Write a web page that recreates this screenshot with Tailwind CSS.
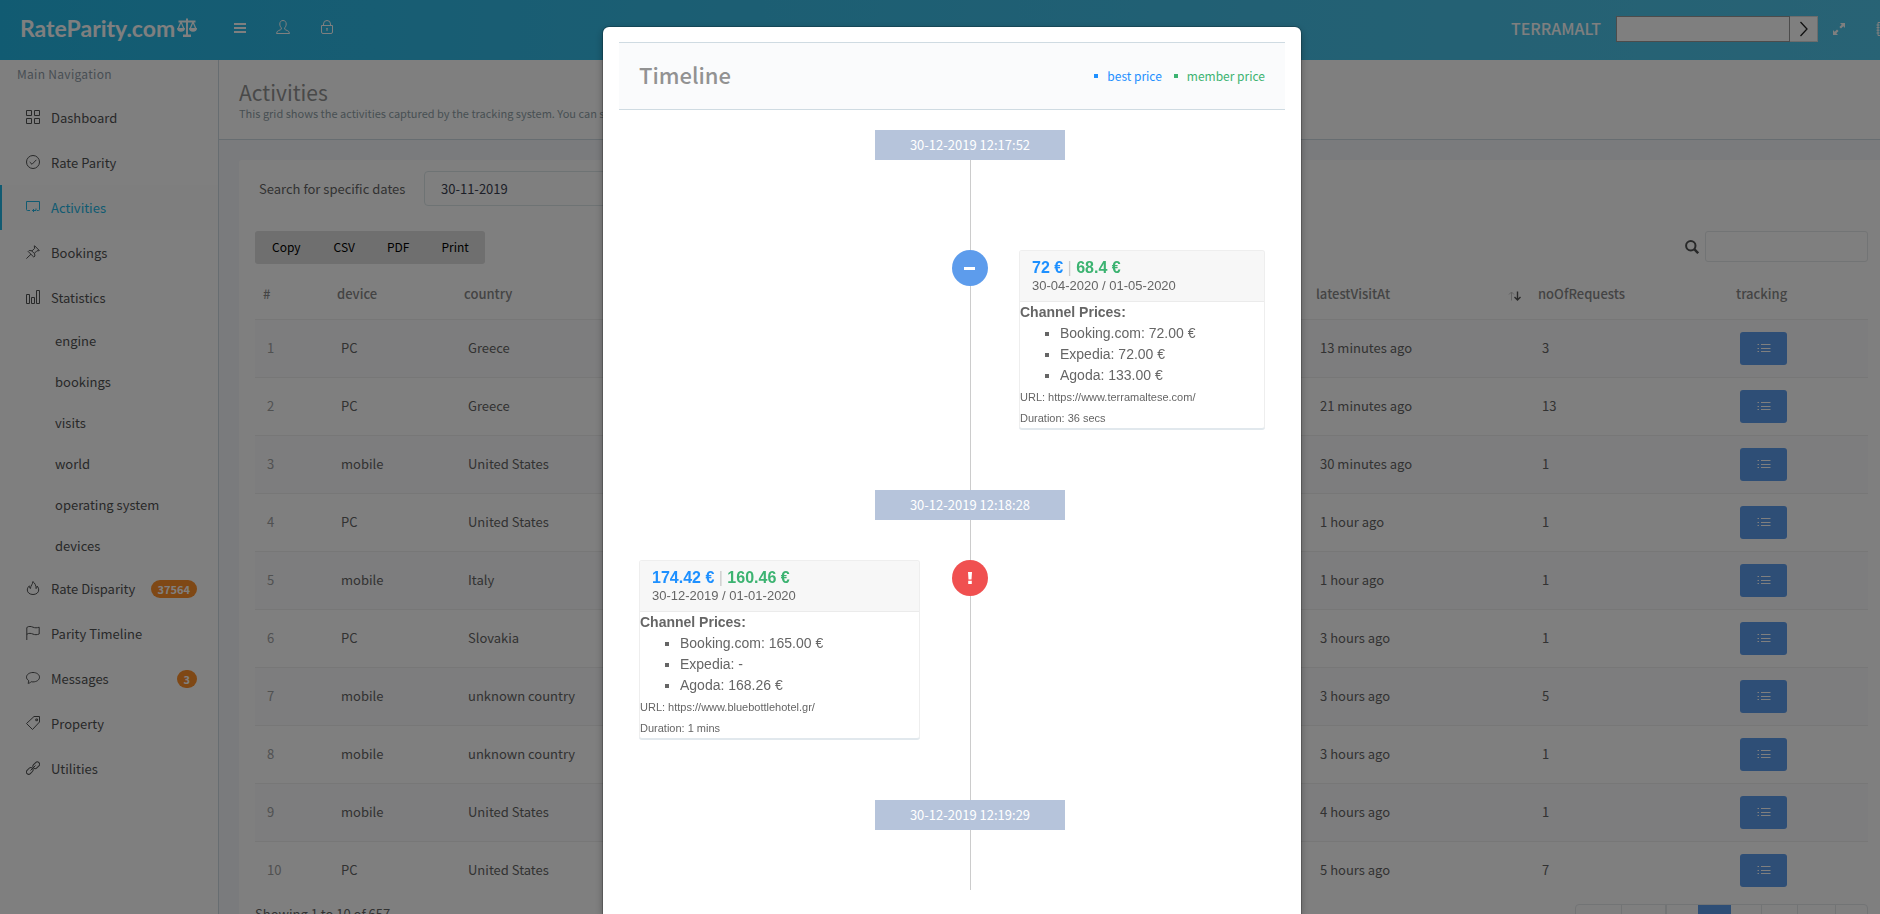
<!DOCTYPE html>
<html lang="en">
<head>
<meta charset="utf-8">
<title>RateParity.com - Activities</title>
<script src="https://cdn.jsdelivr.net/npm/@tailwindcss/browser@4"></script>
</head>
<body class="h-screen overflow-hidden bg-[#f5f7fa] font-['Noto_Sans_CJK_SC',sans-serif] text-[13px] leading-5 text-[#656565]">

<div class="flex h-screen w-[calc(100%+16px)] flex-col overflow-hidden">
  <header class="flex h-[60px] shrink-0 items-center bg-linear-to-r from-[#23b7e5] to-[#51c6ea] pb-3.5 text-white">
    <a href="#" class="ml-5 mt-2.5 flex w-[214px] items-center gap-0.5 font-['Lato',sans-serif] text-[23px] font-bold leading-7">RateParity.com
      <svg class="h-5 w-5" viewBox="0 0 20 20" fill="none" stroke="currentColor" stroke-width="2"><path d="M1.500 3.500h17M10 .5V17" /><path d="M4 4 1.200 10.500M4 4l2.800 6.500M16 4l-2.800 6.500M16 4l2.800 6.500" stroke-width="1.300"/><path d="M0 10h8a4 3.800 0 0 1-8 0zM12 10h8a4 3.800 0 0 1-8 0zM6 16.500h8V19H6z" fill="currentColor" stroke="none"/></svg>
    </a>
    <button aria-label="Toggle menu" class="mt-2.5"><svg class="h-3 w-3" viewBox="0 0 12 12" fill="none" stroke="currentColor" stroke-width="2"><path d="M0 2h12M0 6h12M0 10h12"/></svg></button>
    <button aria-label="Profile" class="ml-[30px] mt-2"><svg class="h-3.5 w-3.5" viewBox="0 0 14 14" fill="none" stroke="currentColor"><path d="M7 .5c-2 0-3.200 1.400-3.200 3.500 0 1.600.6 3 1.500 3.800v1.400C4.800 10.300.5 10.200.5 13.500h13c0-3.300-4.300-3.200-4.800-4.300V7.800c.9-.8 1.500-2.200 1.500-3.800C10.200 1.900 9 .5 7 .5z"/></svg></button>
    <button aria-label="Lock" class="ml-[30px] mt-2"><svg class="h-3.5 w-3.5" viewBox="0 0 14 14" fill="none" stroke="currentColor"><path d="M3.500 5.500V4a3.500 3.500 0 0 1 7 0v1.500M1.500 5.500h11v6.500a1.500 1.500 0 0 1-1.500 1.500H3a1.500 1.500 0 0 1-1.500-1.500z"/><path d="M7 8v3M6.300 8.800h1.400"/></svg></button>
    <div class="ml-auto mt-3 flex items-center">
      <span class="mr-[15px] pb-0.5 text-[16px] font-medium">TERRAMALT</span>
      <input aria-label="Search hotel" class="h-[26px] w-[174px] border border-[#999] bg-white px-1 text-[#656565]">
      <button aria-label="Go" class="flex h-[26px] w-7 items-center justify-center border border-l-0 border-[#d8d8d8] bg-white text-[#222]"><svg class="h-4 w-2.5" viewBox="0 0 10 16" fill="none" stroke="currentColor" stroke-width="1.3"><path d="m1.500 1 6.500 7-6.500 7"/></svg></button>
      <button aria-label="Full screen" class="ml-[15px]"><svg class="h-3 w-3" viewBox="0 0 12 12"><path d="M7 0h5v5l-1.700-1.700L8 5.600 6.400 4l2.300-2.300zM0 7v5h5l-1.700-1.700L5.600 8 4 6.400 1.700 8.700z" fill="currentColor"/></svg></button>
      <button aria-label="Notebook" class="ml-[31px] mr-1.5"><svg class="h-3.5 w-3.5" viewBox="0 0 14 14" fill="none" stroke="currentColor"><path d="M2 .5h11v13H2zM4.500.500v13M.5 3h3M.5 5.600h3M.5 8.200h3M.5 11h3"/></svg></button>
    </div>
  </header>

  <div class="flex min-h-0 grow">
    <aside class="w-[219px] shrink-0 border-r border-[#cfdbe2] bg-white">
      <h2 class="h-[35px] pl-[17px] pt-1 text-[12px] tracking-wide text-[#919da8]">Main Navigation</h2>
      <nav class="whitespace-nowrap text-[13px] text-[#515253]">
        <a href="#" class="flex h-[45px] items-center gap-[11px] pl-[26px]"><svg class="-mt-0.5 h-3.5 w-3.5" viewBox="0 0 14 14" fill="none" stroke="currentColor"><path d="M.5.5h5v5h-5zM8.500.5h5v5h-5zM.5 8.500h5v5h-5zM8.500 8.500h5v5h-5z"/></svg>Dashboard</a>
        <a href="#" class="flex h-[45px] items-center gap-[11px] pl-[26px]"><svg class="-mt-0.5 h-3.5 w-3.5" viewBox="0 0 14 14" fill="none" stroke="currentColor"><circle cx="7" cy="7" r="6.500"/><path d="m3.700 7 2.300 2.300 4.400-4.500"/></svg>Rate Parity</a>
        <a href="#" class="flex h-[45px] items-center gap-[11px] border-l-2 border-[#23b7e5] bg-[#fcfcfc] pl-6 text-[#23b7e5]"><svg class="-mt-0.5 h-3.5 w-3.5" viewBox="0 0 14 14" fill="none" stroke="currentColor"><path d="M4 10.500H1.500a1 1 0 0 1-1-1v-8h13v8a1 1 0 0 1-1 1H11M10 8.500v2H6.500M8 9l-1.500 1.500L8 12"/></svg>Activities</a>
        <a href="#" class="flex h-[45px] items-center gap-[11px] pl-[26px]"><svg class="-mt-0.5 h-3.5 w-3.5" viewBox="0 0 14 14" fill="none" stroke="currentColor"><path d="m8.500.7 4.800 4.800-1.300.4-1-.2-2.500 2.500.4 2.800-1.100 1.100-5.600-5.600 1-1 2.900.3 2.600-2.500-.4-1.300zM5 9.200.4 13.600M5.800 6l2.400 2.400"/></svg>Bookings</a>
        <a href="#" class="flex h-[45px] items-center gap-[11px] pl-[26px]"><svg class="-mt-0.5 h-3.5 w-3.5" viewBox="0 0 14 14" fill="none" stroke="currentColor"><path d="M.5 4.500h3v9h-3zM5.500 7.500h3v6h-3zM10.500.5h3v13h-3z"/></svg>Statistics</a>
        <div class="flex flex-col">
          <a href="#" class="flex h-[41px] items-center pl-[55px]">engine</a>
          <a href="#" class="flex h-[41px] items-center pl-[55px]">bookings</a>
          <a href="#" class="flex h-[41px] items-center pl-[55px]">visits</a>
          <a href="#" class="flex h-[41px] items-center pl-[55px]">world</a>
          <a href="#" class="flex h-[41px] items-center pl-[55px]">operating system</a>
          <a href="#" class="flex h-[41px] items-center pl-[55px]">devices</a>
        </div>
        <a href="#" class="flex h-[45px] items-center gap-[11px] pl-[26px] pr-[21px]"><svg class="-mt-0.5 h-3.5 w-3.5 shrink-0" viewBox="0 0 14 14" fill="none" stroke="currentColor"><path d="M6.800.5C7 3 4.600 4.500 4.400 7.600 3.600 7 3.200 6 3.400 4.800 2 6 1.300 7.500 1.300 9c0 2.700 2.500 4.500 5.700 4.500s5.700-1.800 5.700-4.500c0-1.600-.6-3-1.600-4 0 1.200-.3 2-1 2.600C10.200 5 9 2 6.800.5z"/></svg>Rate Disparity<span class="ml-auto rounded-full bg-[#ff902b] px-[7px] text-[11px] font-bold leading-[18px] text-white">37564</span></a>
        <a href="#" class="flex h-[45px] items-center gap-[11px] pl-[26px]"><svg class="-mt-0.5 h-3.5 w-3.5" viewBox="0 0 14 14" fill="none" stroke="currentColor"><path d="M.8 14V1.500C3-.2 5 .4 7 1.200s4 .8 6.200 0V8c-2.200.9-4.200.9-6.200.1S3 6.800.8 8.300"/></svg>Parity Timeline</a>
        <a href="#" class="flex h-[45px] items-center gap-[11px] pl-[26px] pr-[21px]"><svg class="-mt-0.5 h-3.5 w-3.5" viewBox="0 0 14 14" fill="none" stroke="currentColor"><path d="M7 1.500c3.600 0 6.500 2 6.500 4.700s-2.900 4.700-6.500 4.700c-.6 0-1.200 0-1.800-.2-.8.900-1.900 1.600-3.200 1.600.5-.8.800-1.600.7-2.700C1.300 8.700.5 7.600.5 6.200.5 3.500 3.400 1.500 7 1.500z"/></svg>Messages<span class="ml-auto rounded-full bg-[#ff902b] px-[7px] text-[11px] font-bold leading-[18px] text-white">3</span></a>
        <a href="#" class="flex h-[45px] items-center gap-[11px] pl-[26px]"><svg class="-mt-0.5 h-3.5 w-3.5" viewBox="0 0 14 14" fill="none" stroke="currentColor"><path d="M8 .5h5.500V6l-7 7.500-6-6zM9.800 3h1.700v1.700H9.800z"/></svg>Property</a>
        <a href="#" class="flex h-[45px] items-center gap-[11px] pl-[26px]"><svg class="-mt-0.5 h-3.5 w-3.5" viewBox="0 0 14 14" fill="none" stroke="currentColor"><rect x="6.500" y="2" width="7.500" height="4.600" rx="2.300" transform="rotate(-45 10.250 4.300)"/><rect x="0" y="7.600" width="7.500" height="4.600" rx="2.300" transform="rotate(-45 3.750 9.900)"/><path d="m4.500 9.500 5-5"/></svg>Utilities</a>
      </nav>
    </aside>

    <main class="flex min-w-0 grow flex-col">
      <div class="h-20 shrink-0 whitespace-nowrap border-b border-[#cfdbe2] bg-white pl-5 pt-[18px]">
        <h1 class="text-[21px] leading-7 text-[#929292]">Activities</h1>
        <p class="text-[11px] leading-[14px] text-[#909fa7]">This grid shows the activities captured by the tracking system. You can see</p>
      </div>
      <section class="ml-5 mr-3 mt-5 rounded-[3px] bg-white px-4 pt-[11px]">
        <div class="flex items-center pl-1">
          <label for="from" class="w-[165px]">Search for specific dates</label>
          <input id="from" value="30-11-2019" class="h-[35px] w-80 rounded border border-[#dde6e9] px-4 text-[#3a3f51]">
        </div>
        <div class="mt-[25px] flex items-start justify-between">
          <div class="flex h-[33px] rounded-[3px] bg-[#dedede] text-[12px] text-black">
            <button class="px-[17px] pb-0.5">Copy</button><button class="px-4 pb-0.5">CSV</button><button class="px-4 pb-0.5">PDF</button><button class="px-4 pb-0.5">Print</button>
          </div>
          <label class="flex items-center gap-1.5"><svg class="h-3.5 w-3.5 text-[#515253]" viewBox="0 0 14 14" fill="none" stroke="currentColor" stroke-width="2"><circle cx="5.800" cy="5.800" r="4.700"/><path d="m9.200 9.200 4 4" stroke-width="2.500"/></svg><input aria-label="Search table" class="h-[31px] w-[163px] rounded-[3px] border border-[#e4e8ea] px-2"></label>
        </div>
        <table class="mt-[5px] w-full table-fixed border-collapse text-left">
          <colgroup><col class="w-[74px]"><col class="w-[127px]"><col><col class="w-[222px]"><col class="w-[198px]"><col class="w-[140px]"></colgroup>
          <thead>
            <tr class="h-[50px] text-[#888]">
              <th class="px-2 font-medium">#</th><th class="px-2 font-medium">device</th><th class="px-2 font-medium">country</th>
              <th class="px-2 font-medium"><span class="flex items-center justify-between">latestVisitAt<svg class="mt-1 h-2.5 w-3.5" viewBox="0 0 14 10" fill="none"><path d="M3.500 9.500V1M1 3.500 3.500 1 6 3.500" stroke="#c4c4c4"/><path d="M9.500.5V9M6.500 6l3 3 3-3" stroke="#555" stroke-width="1.400"/></svg></span></th>
              <th class="px-2 font-medium">noOfRequests</th><th class="px-2 font-medium">tracking</th>
            </tr>
          </thead>
          <tbody id="rows"></tbody>
        </table>
        <div class="mt-[5px] flex items-start justify-between">
          <p>Showing 1 to 10 of 657</p>
          <div class="flex h-8 rounded border border-[#e4e8ea] text-center">
            <button class="w-[46px] border-r border-[#e4e8ea]">First</button><button class="w-[45px] border-r-2 border-[#e4e8ea]">Prev</button><button class="w-[31px]">1</button><button class="w-[33px] bg-[#5d9cec] text-white">2</button><button class="w-[31px] border-r border-[#e4e8ea]">3</button><button class="w-[36px] border-r border-[#e4e8ea]">4</button><button class="w-[38px] border-r border-[#e4e8ea]">5</button><button class="w-[31px]">6</button>
          </div>
        </div>
      </section>
    </main>
  </div>
</div>

<div class="fixed inset-0 flex items-start justify-center overflow-hidden bg-black/50 pl-6 pt-[27px]">
  <div role="dialog" aria-label="Timeline" class="min-h-full w-[698px] max-w-full rounded-t-md bg-white px-4 pt-[15px] shadow-[0_0_0_1px_rgba(0,0,0,0.2),0_3px_9px_rgba(0,0,0,0.3)]">
    <div class="flex h-[68px] items-center justify-between border-y border-[#cfdbe2] bg-[#fafbfc] px-5">
      <h2 class="pb-1 text-[22px] font-medium text-[#929292]">Timeline</h2>
      <ul class="flex gap-3 text-[12px]">
        <li class="flex items-center gap-[9px] text-[#1e90ff]"><span class="h-1 w-1 bg-current"></span>best price</li>
        <li class="flex items-center gap-[9px] text-[#3cb371]"><span class="h-1 w-1 bg-current"></span>member price</li>
      </ul>
    </div>
    <div class="relative mx-5 mt-5 pb-[60px]">
      <div class="absolute inset-0 grid grid-cols-[331fr_295fr]"><span class="col-start-2 w-px bg-[#ccc]"></span></div>
      <div class="relative grid grid-cols-[281fr_99fr_246fr] items-start">
        <div class="col-span-3 ml-[236px] h-[30px] w-[190px] bg-[#b6c4db] text-center text-[13px] leading-[30px] text-white">30-12-2019 12:17:52</div>

        <div class="col-start-2 mt-[90px] flex h-9 w-9 items-center justify-center justify-self-center rounded-full bg-[#5d9cec]"><span class="h-[3px] w-[11px] bg-white"></span></div>
        <article class="mb-[61px] mt-[90px] overflow-hidden rounded-[3px] border border-[#eee] border-b-[#e1e8ed] bg-white font-['Liberation_Sans',sans-serif] text-[14px] leading-[21px] shadow-[0_1px_0_#e1e8ed]">
          <header class="border-b border-[#ebebeb] bg-[#f7f7f7] px-3 pb-1.5 pt-2 leading-[18px]">
            <h3 class="text-[16px] font-bold"><span class="text-[#1e90ff]">72 €</span> <span class="font-normal text-[#ccc]">|</span> <span class="text-[#3cb371]">68.4 €</span></h3>
            <p class="text-[13px]">30-04-2020 / 01-05-2020</p>
          </header>
          <p class="font-bold">Channel Prices:</p>
          <ul class="list-[square] pl-10"><li>Booking.com: 72.00 €</li><li>Expedia: 72.00 €</li><li>Agoda: 133.00 €</li></ul>
          <p class="h-[21px]"><small class="text-[11px]">URL: https://www.terramaltese.com/</small></p>
          <p class="h-[21px]"><small class="text-[11px]">Duration: 36 secs</small></p>
        </article>

        <div class="col-span-3 ml-[236px] h-[30px] w-[190px] bg-[#b6c4db] text-center text-[13px] leading-[30px] text-white">30-12-2019 12:18:28</div>

        <article class="mb-[61px] mt-10 overflow-hidden rounded-[3px] border border-[#eee] border-b-[#e1e8ed] bg-white font-['Liberation_Sans',sans-serif] text-[14px] leading-[21px] shadow-[0_1px_0_#e1e8ed]">
          <header class="border-b border-[#ebebeb] bg-[#f7f7f7] px-3 pb-1.5 pt-2 leading-[18px]">
            <h3 class="text-[16px] font-bold"><span class="text-[#1e90ff]">174.42 €</span> <span class="font-normal text-[#ccc]">|</span> <span class="text-[#3cb371]">160.46 €</span></h3>
            <p class="text-[13px]">30-12-2019 / 01-01-2020</p>
          </header>
          <p class="font-bold">Channel Prices:</p>
          <ul class="list-[square] pl-10"><li>Booking.com: 165.00 €</li><li>Expedia: -</li><li>Agoda: 168.26 €</li></ul>
          <p class="h-[21px]"><small class="text-[11px]">URL: https://www.bluebottlehotel.gr/</small></p>
          <p class="h-[21px]"><small class="text-[11px]">Duration: 1 mins</small></p>
        </article>
        <div class="col-start-2 mt-10 flex h-9 w-9 items-center justify-center justify-self-center rounded-full bg-[#f05050]"><svg class="h-3 w-1.5" viewBox="0 0 6 12" fill="#fff"><path d="M1 0h4l-.5 7.500h-3zM1.200 8.800h3.600V12H1.200z"/></svg></div>

        <div class="col-span-3 ml-[236px] h-[30px] w-[190px] bg-[#b6c4db] text-center text-[13px] leading-[30px] text-white">30-12-2019 12:19:29</div>
      </div>
    </div>
  </div>
</div>

<script>
const visits = [
  ["PC", "Greece", "13 minutes ago", 3], ["PC", "Greece", "21 minutes ago", 13],
  ["mobile", "United States", "30 minutes ago", 1], ["PC", "United States", "1 hour ago", 1],
  ["mobile", "Italy", "1 hour ago", 1], ["PC", "Slovakia", "3 hours ago", 1],
  ["mobile", "unknown country", "3 hours ago", 5], ["mobile", "unknown country", "3 hours ago", 1],
  ["mobile", "United States", "4 hours ago", 1], ["PC", "United States", "5 hours ago", 7]
];
document.getElementById("rows").innerHTML = visits.map(([device, country, at, n], i) => `
  <tr class="h-[58px] border-t border-[#eee] odd:bg-[#fafbfc]">
    <td class="px-3 text-[#a1a2a3]">${i + 1}</td><td class="px-3">${device}</td><td class="px-3">${country}</td>
    <td class="px-3">${at}</td><td class="px-3">${n}</td>
    <td class="px-3"><button aria-label="Show timeline" class="flex h-[33px] w-[47px] items-center justify-center rounded-[3px] bg-[#5d9cec] text-white"><svg class="h-3 w-3.5" viewBox="0 0 14 12" fill="none" stroke="currentColor"><path d="M.5 2.500h1.500M4 2.500h9.500M.5 6.500h1.500M4 6.500h9.500M.5 9.500h1.500M4 9.500h9.500"/></svg></button></td>
  </tr>`).join("");
</script>
</body>
</html>
